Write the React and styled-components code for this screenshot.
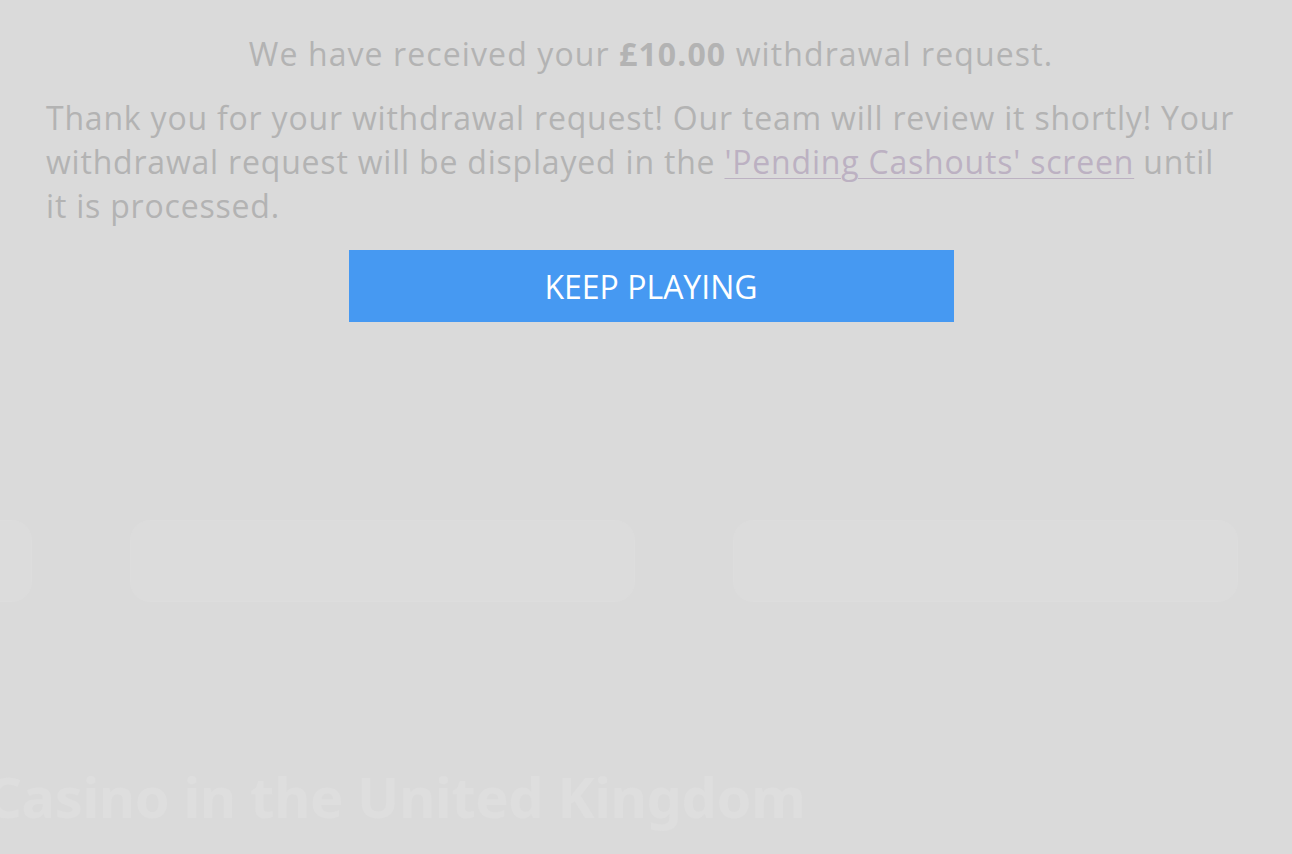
import React from 'react';
import styled, { createGlobalStyle } from 'styled-components';

const GlobalStyle = createGlobalStyle`
    html, body {
        margin: 0;
        padding: 0;
        background: #dadada;
    }
    body {
        font-family: "Open Sans", "Noto Sans", sans-serif;
    }
`;

export default function App() {
    return (
        <>
            <GlobalStyle />
            <StyledPage>
                <Backdrop>
                    <CardRow>
                        <GhostCard />
                        <GhostCard />
                        <GhostCard />
                    </CardRow>
                    <GhostTitle>Casino in the United Kingdom</GhostTitle>
                </Backdrop>
                <Message>
                    <Heading>
                        We have received your <strong>£10.00</strong> withdrawal request.
                    </Heading>
                    <Body>
                        Thank you for your withdrawal request! Our team will review it shortly! Your
                        withdrawal request will be displayed in the <a href="#pending">'Pending Cashouts' screen</a> until
                        it is processed.
                    </Body>
                    <KeepPlaying type="button">KEEP PLAYING</KeepPlaying>
                </Message>
            </StyledPage>
        </>
    );
}

const StyledPage = styled.div`
    position: relative;
    width: 1292px;
    height: 854px;
    overflow: hidden;
    background: #dadada;
`;

const Backdrop = styled.div`
    display: flex;
    flex-direction: column;
    height: 100%;
    padding-top: 520px;
    box-sizing: border-box;
`;

const CardRow = styled.div`
    display: grid;
    grid-template-columns: 110px 505px 505px;
    gap: 98px;
    margin-left: -78px;
`;

const GhostCard = styled.div`
    height: 80px;
    border-radius: 20px;
    background: #dcdcdc;
    border: 1px solid #dddddd;
`;

const GhostTitle = styled.h1`
    margin: 156px 0 0 -14px;
    font-family: "Noto Sans", sans-serif;
    font-size: 56px;
    font-weight: 700;
    letter-spacing: -0.4px;
    color: #dedede;
    white-space: nowrap;
`;

const Message = styled.div`
    position: absolute;
    top: 0;
    left: 0;
    right: 0;
    padding: 30px 36px 0 46px;
    display: flex;
    flex-direction: column;
    align-items: center;
    color: #b3b3b3;
`;

const Heading = styled.p`
    margin: 0;
    font-size: 32px;
    line-height: 48px;
    letter-spacing: 1.1px;
    text-align: center;
    strong {
        font-weight: 700;
    }
`;

const Body = styled.p`
    margin: 18px 0 0 0;
    max-width: 1192px;
    font-size: 32px;
    line-height: 44px;
    letter-spacing: 0.8px;
    align-self: flex-start;
    a {
        color: #bcb1c2;
        text-decoration: underline;
        text-underline-offset: 4px;
        text-decoration-thickness: 1px;
    }
`;

const KeepPlaying = styled.button`
    margin-top: 22px;
    width: 605px;
    height: 72px;
    border: none;
    background: #4699f2;
    color: #ffffff;
    font-family: "Open Sans", sans-serif;
    font-size: 32px;
    cursor: pointer;
`;
